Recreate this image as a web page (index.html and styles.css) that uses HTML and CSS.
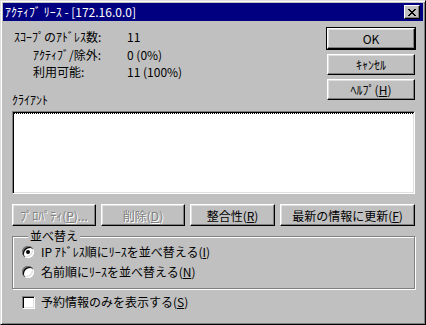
FILE: index.html
```html
<!DOCTYPE html>
<html lang="ja">
<head>
  <meta charset="UTF-8" />
  <title>ｱｸﾃｨﾌﾞ ﾘｰｽ</title>
  <link rel="stylesheet" href="styles.css">
</head>
<body>
  <div class="window">
    <div class="titlebar">
      <span class="title">ｱｸﾃｨﾌﾞ ﾘｰｽ - [172.16.0.0]</span>
      <span class="close-btn">
        <svg width="8" height="7" viewBox="0 0 8 7">
          <path d="M0 0h2v1h-2zM6 0h2v1h-2zM1 1h2v1h-2zM5 1h2v1h-2zM2 2h4v1h-4zM3 3h2v1h-2zM2 4h4v1h-4zM1 5h2v1h-2zM5 5h2v1h-2zM0 6h2v1h-2zM6 6h2v1h-2z" fill="#000"/>
        </svg>
      </span>
    </div>

    <div class="dialog">
      <div class="top">
        <div class="top-left">
          <div class="stats">
            <div class="stat-row"><span class="stat-label">ｽｺｰﾌﾟのｱﾄﾞﾚｽ数:</span><span class="stat-value">11</span></div>
            <div class="stat-row sub"><span class="stat-label">ｱｸﾃｨﾌﾞ/除外:</span><span class="stat-value">0 (0%)</span></div>
            <div class="stat-row sub"><span class="stat-label">利用可能:</span><span class="stat-value">11 (100%)</span></div>
          </div>
          <div class="client-label">ｸﾗｲｱﾝﾄ</div>
        </div>
        <div class="side-buttons">
          <button class="btn default">OK</button>
          <button class="btn">ｷｬﾝｾﾙ</button>
          <button class="btn">ﾍﾙﾌﾟ(<u>H</u>)</button>
        </div>
      </div>

      <div class="listbox"><div class="focus-row"></div></div>

      <div class="action-row">
        <button class="btn disabled w-prop">ﾌﾟﾛﾊﾟﾃｨ(<u>P</u>)...</button>
        <button class="btn disabled w-del">削除(<u>D</u>)</button>
        <button class="btn w-check">整合性(<u>R</u>)</button>
        <button class="btn w-refresh">最新の情報に更新(<u>F</u>)</button>
      </div>

      <fieldset class="sort-group">
        <legend>並べ替え</legend>
        <div class="option-row"><span class="radio checked"></span>IP ｱﾄﾞﾚｽ順にﾘｰｽを並べ替える(<u>I</u>)</div>
        <div class="option-row"><span class="radio"></span>名前順にﾘｰｽを並べ替える(<u>N</u>)</div>
      </fieldset>

      <div class="check-row"><span class="checkbox"></span>予約情報のみを表示する(<u>S</u>)</div>
    </div>
  </div>
</body>
</html>
```

FILE: styles.css
```css
* {
  box-sizing: border-box;
}
body {
  margin: 0;
  background-color: #c0c0c0;
  font-family: "Noto Sans CJK JP", "Liberation Sans", sans-serif;
  font-size: 12px;
  color: #000;
}
.window {
  width: 426px;
  height: 325px;
  padding: 2px;
  background-color: #c0c0c0;
  border: 1px solid;
  border-color: #dfdfdf #000 #000 #dfdfdf;
  box-shadow: inset 1px 1px #fff, inset -1px -1px #808080;
}
.titlebar {
  height: 18px;
  display: flex;
  align-items: center;
  padding: 0 3px 0 2px;
  background-color: #000080;
  color: #fff;
}
.title {
  line-height: 18px;
  white-space: nowrap;
}
.close-btn {
  margin-left: auto;
  width: 16px;
  height: 14px;
  display: flex;
  align-items: center;
  justify-content: center;
  background-color: #c0c0c0;
  border: 1px solid;
  border-color: #fff #000 #000 #fff;
  box-shadow: inset -1px -1px #808080;
}
.dialog {
  padding: 0 8px 0 9px;
}
.top {
  display: flex;
  justify-content: space-between;
}
.stats {
  padding: 7px 0 0 2px;
}
.stat-row {
  display: grid;
  grid-template-columns: 113px auto;
  line-height: 17.5px;
  white-space: nowrap;
}
.stat-row.sub {
  padding-left: 19px;
  grid-template-columns: 94px auto;
}
.client-label {
  margin-top: 11.5px;
  line-height: 16px;
}
.side-buttons {
  display: flex;
  flex-direction: column;
  padding-top: 7px;
}
.btn {
  height: 21px;
  padding: 0;
  font-family: inherit;
  font-size: 12px;
  color: #000;
  background-color: #c0c0c0;
  border: 1px solid;
  border-color: #fff #000 #000 #fff;
  box-shadow: inset -1px -1px #808080, inset 1px 1px #dfdfdf;
  white-space: nowrap;
}
.side-buttons .btn {
  width: 88px;
  margin-bottom: 4px;
}
.side-buttons .btn.default {
  outline: 1px solid #000;
  margin-bottom: 5px;
}
.btn.disabled {
  color: #808080;
  text-shadow: 1px 1px #fff;
}
.listbox {
  height: 83px;
  margin-top: 3px;
  background-color: #fff;
  border: 1px solid;
  border-color: #808080 #fff #fff #808080;
  box-shadow: inset 1px 1px #000, inset -1px -1px #dfdfdf;
  padding: 1px;
}
.focus-row {
  height: 1px;
  border-top: 1px dotted #000;
}
.action-row {
  display: flex;
  gap: 5px;
  margin-top: 10px;
}
.action-row .btn {
  height: 22px;
}
.w-prop { width: 84px; }
.w-del { width: 84px; }
.w-check { width: 85px; }
.w-refresh { width: 135px; }
.sort-group {
  margin: 4px 0 0;
  padding: 0 0 6px 9px;
  border: 1px solid #808080;
  box-shadow: inset 1px 1px #fff, 1px 1px #fff;
}
.sort-group legend {
  margin-left: 6px;
  padding: 0 2px;
  line-height: 12px;
  background-color: #c0c0c0;
}
.option-row {
  display: flex;
  align-items: center;
  line-height: 20px;
  white-space: nowrap;
}
.radio {
  width: 12px;
  height: 12px;
  margin-right: 7px;
  border-radius: 50%;
  background-color: #fff;
  display: flex;
  align-items: center;
  justify-content: center;
  box-shadow: inset 1px 1px #808080, inset 2px 2px #000, inset -1px -1px #fff, inset -2px -2px #dfdfdf;
}
.radio.checked::after {
  content: "";
  width: 4px;
  height: 4px;
  border-radius: 50%;
  background-color: #000;
}
.check-row {
  display: flex;
  align-items: center;
  margin-top: 5px;
  padding-left: 10px;
  line-height: 16px;
  white-space: nowrap;
}
.checkbox {
  width: 13px;
  height: 13px;
  margin-right: 6px;
  background-color: #fff;
  border: 1px solid;
  border-color: #808080 #fff #fff #808080;
  box-shadow: inset 1px 1px #000, inset -1px -1px #dfdfdf;
}
```
